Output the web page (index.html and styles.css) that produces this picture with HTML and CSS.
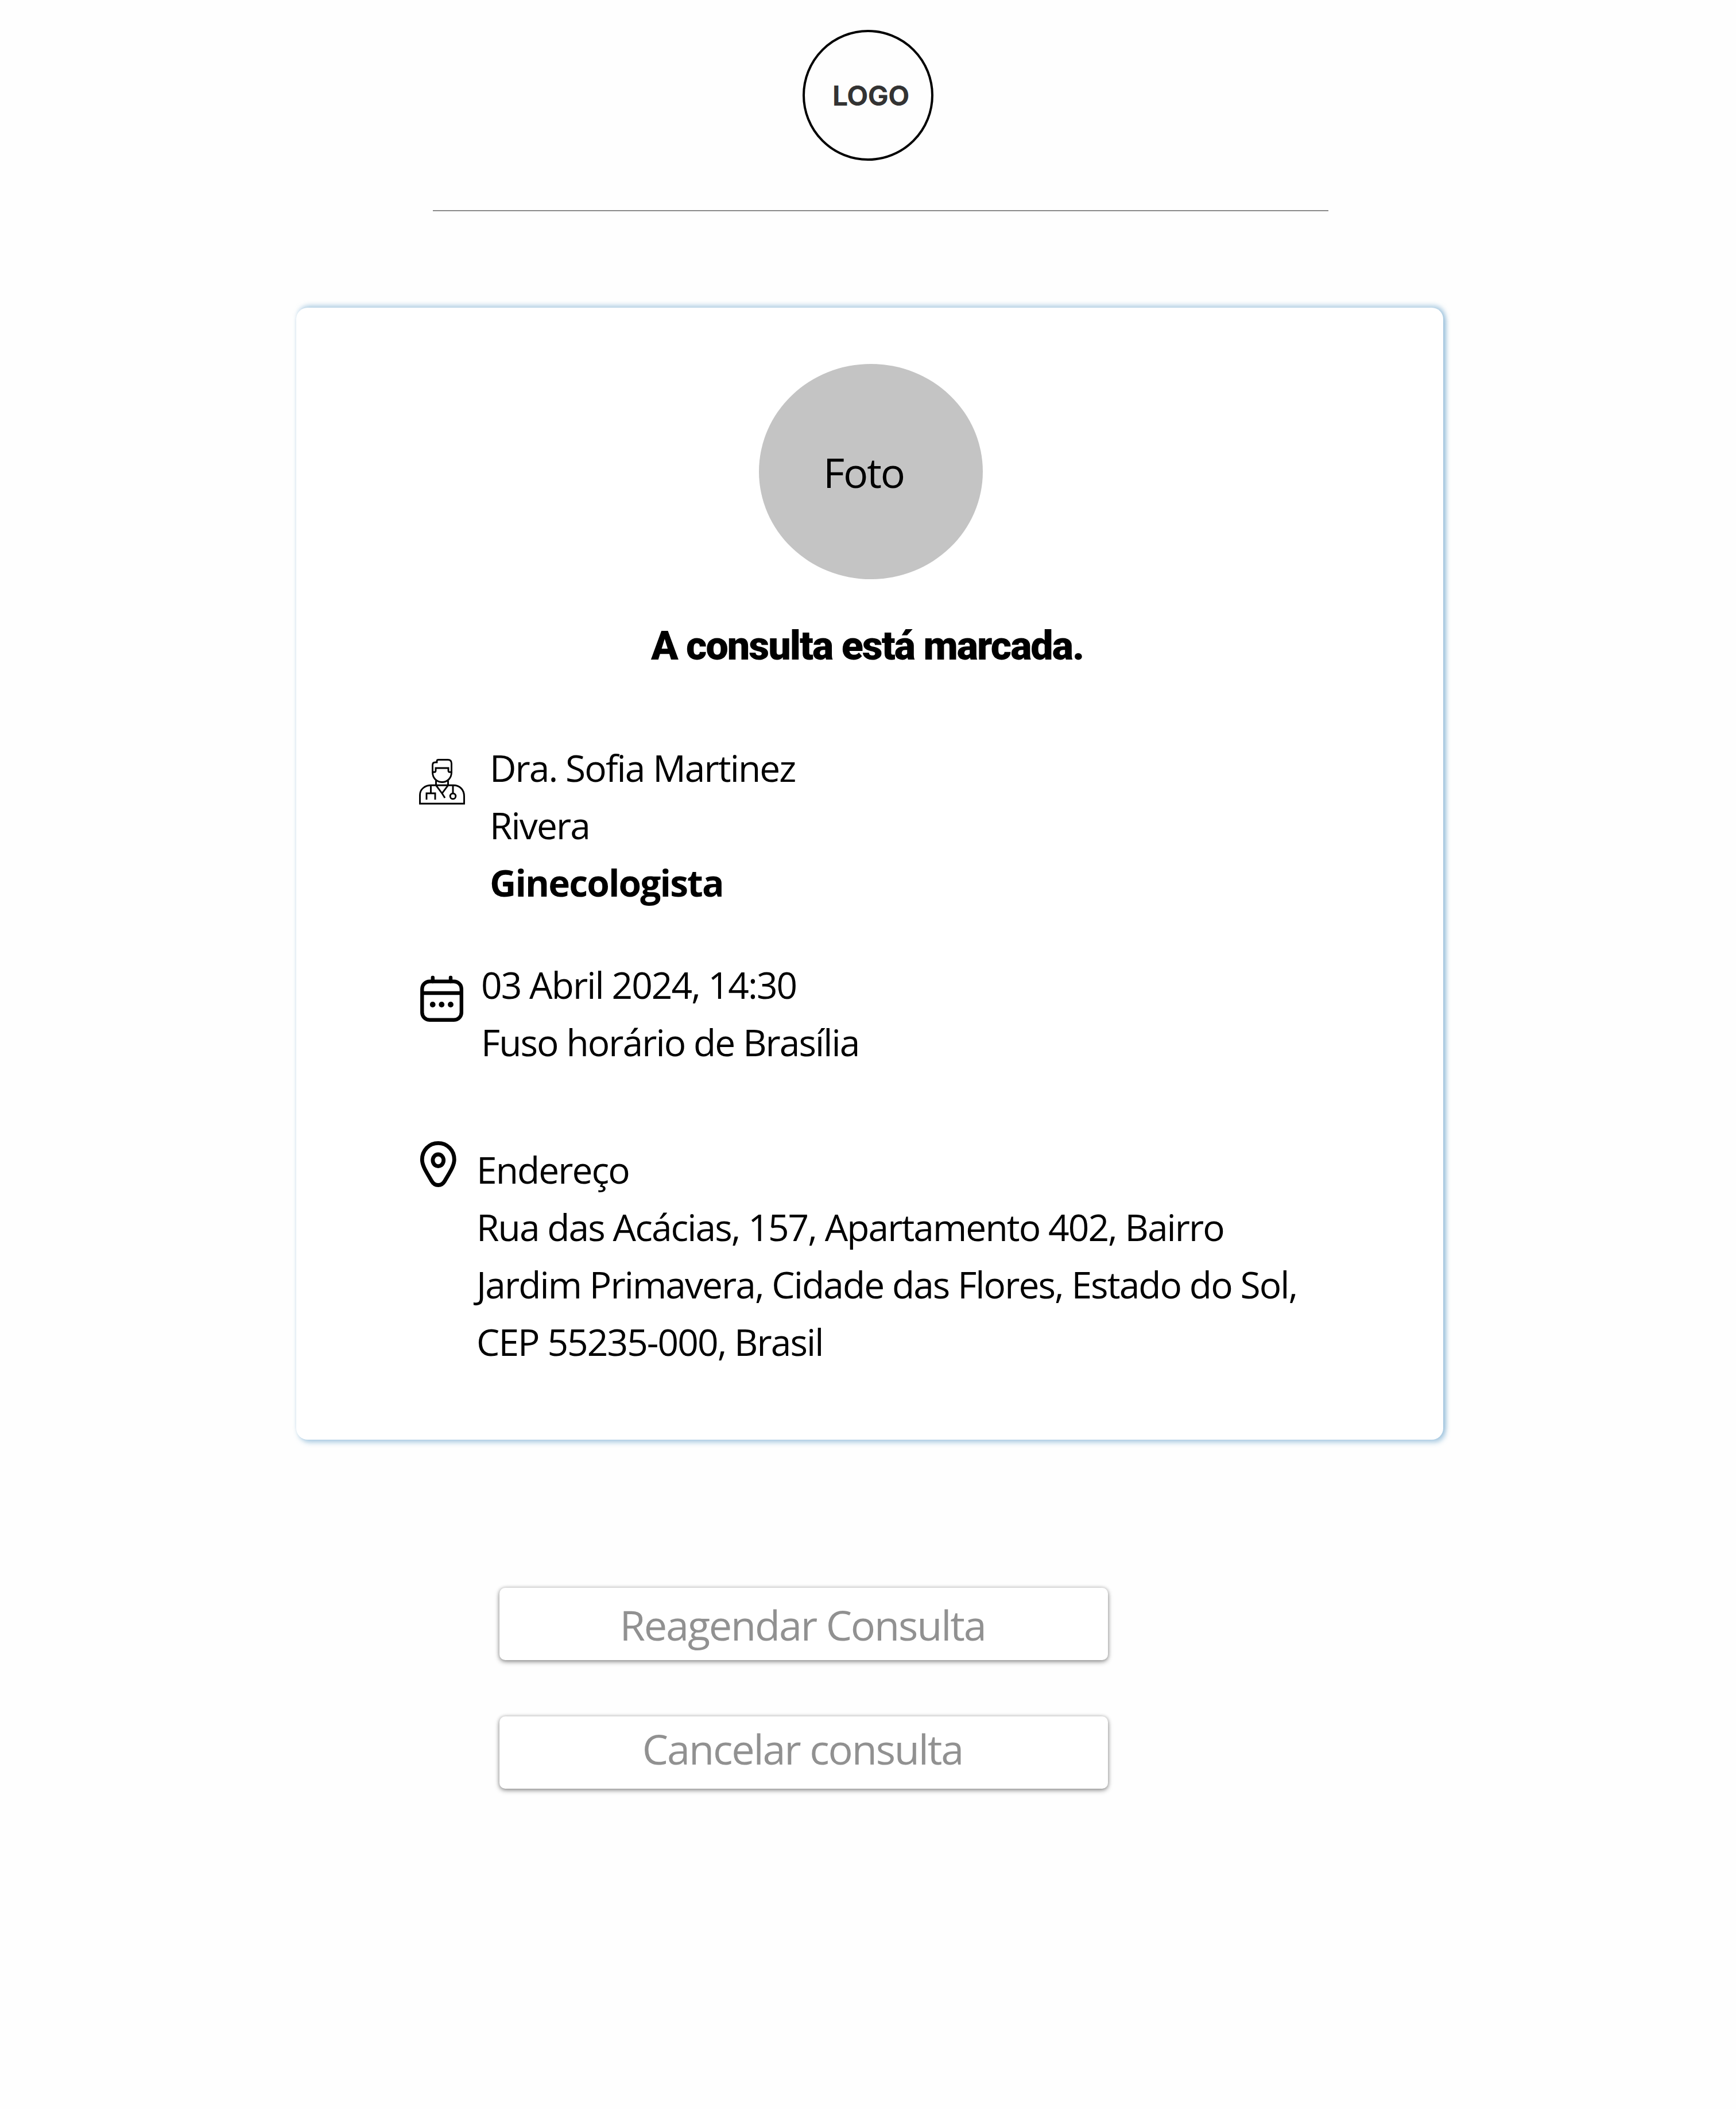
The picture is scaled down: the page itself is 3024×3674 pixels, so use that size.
FILE: index.html
```html
<!DOCTYPE html>
<html lang="pt-BR">
<head>
<meta charset="utf-8">
<title>Consulta marcada</title>
<link rel="stylesheet" href="styles.css">
</head>
<body>
<header class="header">
  <div class="logo">LOGO</div>
</header>
<main class="main">
  <section class="card">
    <div class="photo">Foto</div>
    <h1 class="title">A consulta está marcada.</h1>
    <div class="row row-doctor">
      <svg class="icon" viewBox="0 0 120 120" fill="none" stroke="#000" stroke-width="2.9">
        <path d="M11.5 100V85C11.5 75 20 68 31 68H70C81 68 88.500 76 88.500 87V100Z"/>
        <path d="M33.500 45V33Q33.500 28 38 28H41V26Q41 23.500 44 23.500H60Q66.500 23.500 66.500 30V45H63Q61 45 61 42V38H39V42Q39 45 37 45Z"/>
        <path d="M33.500 45C33.500 56 41 62.500 50 62.500S66.500 56 66.500 45"/>
        <path d="M39.500 60V68L50 82L60.500 68V60M50 82L55 90"/>
        <path d="M30.500 68V82M23 93V82H38V93M69 68V82"/>
        <circle cx="69" cy="87" r="4.800"/>
      </svg>
      <p class="text">Dra. Sofia Martinez<br>Rivera<br><strong>Ginecologista</strong></p>
    </div>
    <div class="row row-date">
      <svg class="icon" viewBox="0 0 120 120" fill="none" stroke="#000" stroke-width="6.400">
        <rect x="15.300" y="29.700" width="68.500" height="67" rx="13"/>
        <path d="M15 50H84"/>
        <path d="M33.800 23V30M65 23V30" stroke-linecap="round"/>
        <g fill="#000" stroke="none"><circle cx="33.700" cy="70" r="4.900"/><circle cx="49.300" cy="70" r="4.900"/><circle cx="65" cy="70" r="4.900"/></g>
      </svg>
      <p class="text">03 Abril 2024, 14:30<br>Fuso horário de Brasília</p>
    </div>
    <div class="row row-address">
      <svg class="icon" viewBox="0 0 120 120" fill="none" stroke="#000" stroke-width="6.800">
        <path d="M43.300 21.300C27.500 21.300 15.300 34 15.300 50C15.300 61 23 72 32 87.500Q36 94.500 43.300 94.500T54.600 87.500C63.600 72 71.300 61 71.300 50C71.300 34 59.100 21.300 43.300 21.300Z"/>
        <ellipse cx="43.300" cy="51.300" rx="9.400" ry="10.300"/>
      </svg>
      <p class="text">Endereço<br>Rua das Acácias, 157, Apartamento 402, Bairro<br>Jardim Primavera, Cidade das Flores, Estado do Sol,<br>CEP 55235-000, Brasil</p>
    </div>
  </section>
  <div class="actions">
    <button class="button button-reschedule">Reagendar Consulta</button>
    <button class="button button-cancel">Cancelar consulta</button>
  </div>
</main>
</body>
</html>
```
FILE: styles.css
```css
* { box-sizing: border-box; }
body {
  margin: 0;
  min-height: 3674px;
  background: #fefefe;
  color: #000;
  font-family: "Open Sans", sans-serif;
}
.header {
  width: 1560px;
  height: 368px;
  margin-left: 754px;
  padding: 52px 0 0 644px;
  border-bottom: 2px solid #8a8a8a;
}
.logo {
  width: 228px;
  height: 228px;
  padding: 0 0 0 48px;
  border: 4px solid #000;
  border-radius: 50%;
  color: #333;
  font: 700 48px/222px Inter, sans-serif;
  letter-spacing: -0.5px;
  white-space: nowrap;
}
.card {
  width: 1998px;
  height: 1972px;
  margin: 168px 0 0 516px;
  padding-top: 98px;
  border-radius: 20px;
  background: #fff;
  box-shadow: 4px 5px 9px rgba(130, 178, 212, .65), 3px -4px 9px rgba(130, 178, 212, .6);
}
.photo {
  width: 390px;
  height: 375px;
  margin-left: 806px;
  padding-left: 112px;
  border-radius: 50%;
  background: #c4c4c4;
  font-size: 72px;
  line-height: 376px;
  letter-spacing: -2.16px;
}
.title {
  height: 100px;
  margin: 66px 0 0 618px;
  font: 900 70px/100px Roboto, sans-serif;
  letter-spacing: -2px;
  white-space: nowrap;
}
.row { display: flex; padding-left: 204px; }
.icon { flex: none; width: 120px; height: 120px; }
.text {
  margin: 0;
  font-size: 64px;
  line-height: 100px;
  letter-spacing: -1.9px;
  white-space: nowrap;
}
.text strong { font-weight: 700; }
.row-doctor { height: 378px; margin-top: 113px; }
.row-doctor .icon { margin-top: 12px; }
.row-doctor .text { margin-left: 13px; }
.row-date { height: 322px; }
.row-date .icon { margin-top: 14px; }
.row-date .text { margin-left: -2px; }
.row-address .icon { margin-top: -18px; }
.row-address .text { margin-left: -10px; }
.actions {
  display: flex;
  flex-direction: column;
  gap: 98px;
  width: 1060px;
  margin: 258px 0 0 870px;
}
.button {
  height: 126px;
  padding: 0 4px 0 0;
  border: 0;
  border-radius: 10px;
  background: #fff;
  box-shadow: 0 3px 8px rgba(0, 0, 0, .4), 0 0 6px rgba(0, 0, 0, .2);
  color: #919191;
  font: 400 72px/124px "Open Sans", sans-serif;
  letter-spacing: -2.16px;
}
.button-reschedule { padding-top: 2px; }
.button-cancel { padding-bottom: 14px; line-height: 112px; }
```
